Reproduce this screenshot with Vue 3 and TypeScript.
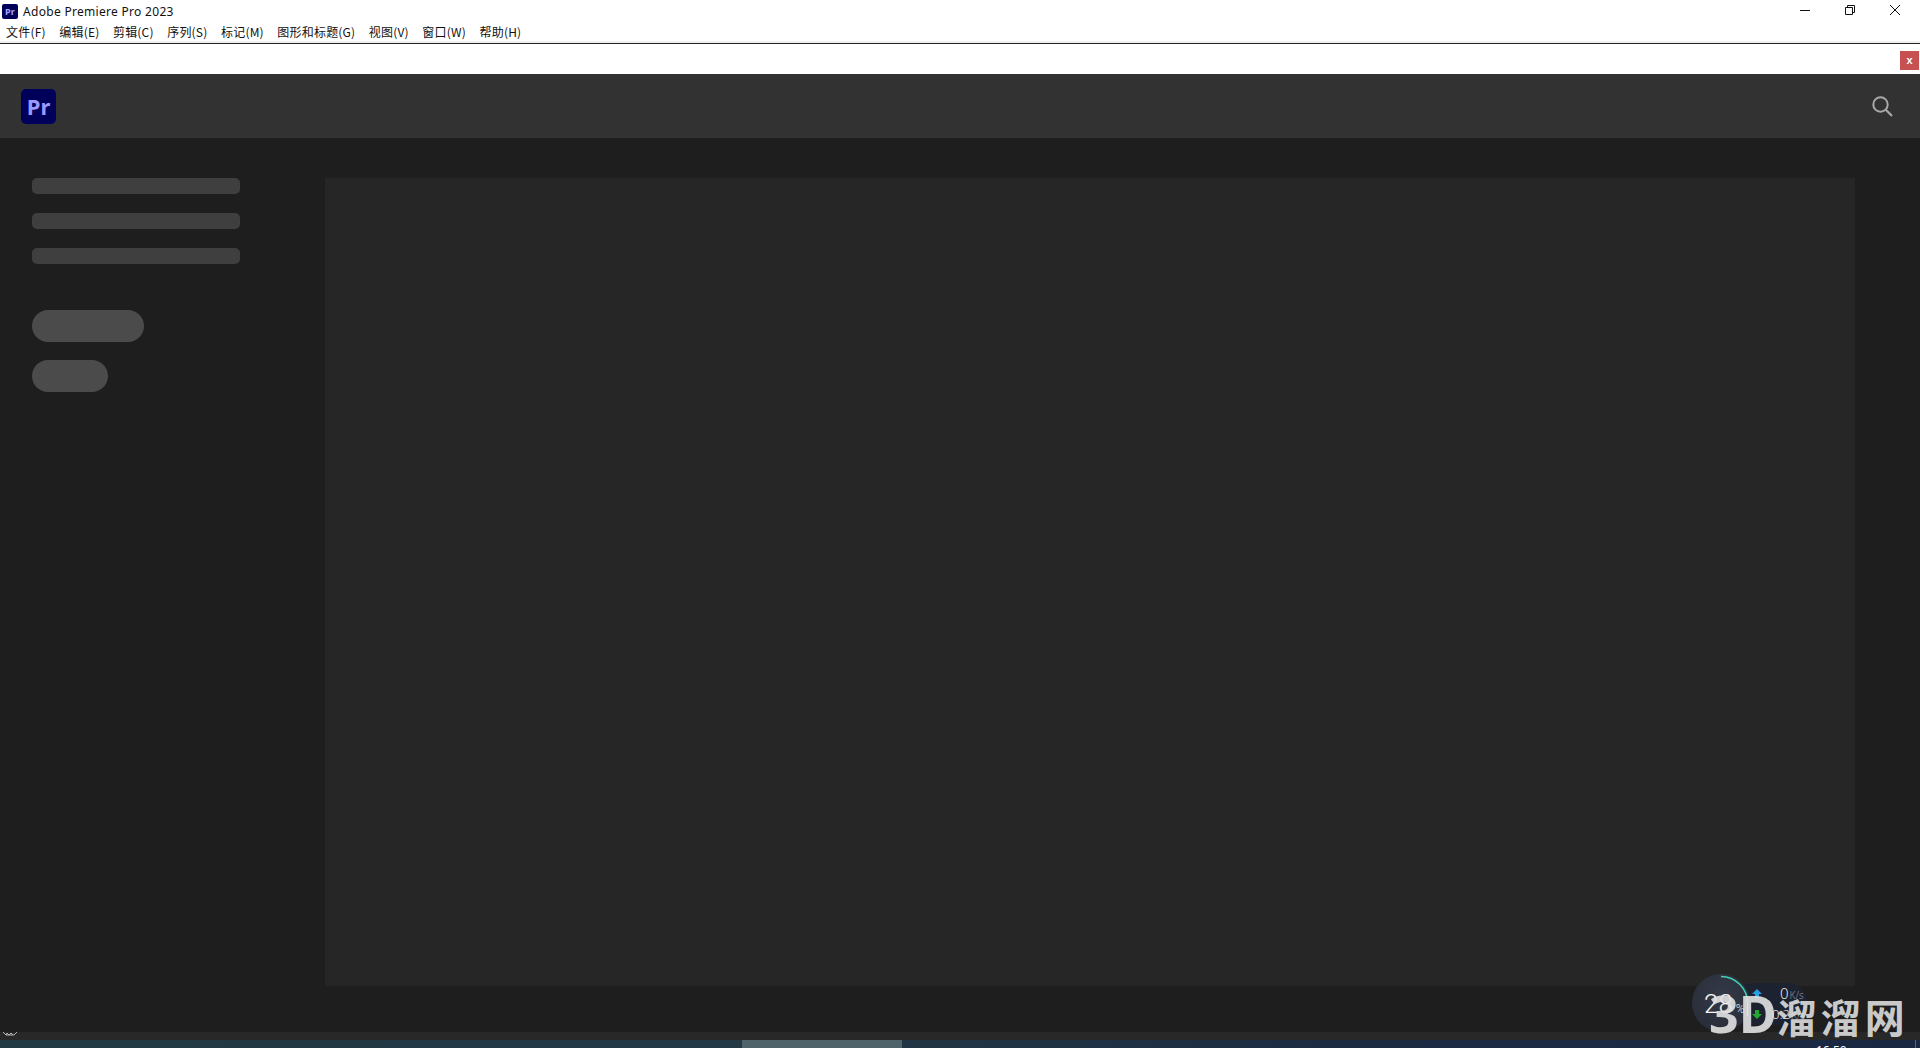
<script setup lang="ts">
const menus = ['文件(F)', '编辑(E)', '剪辑(C)', '序列(S)', '标记(M)', '图形和标题(G)', '视图(V)', '窗口(W)', '帮助(H)']
const skeletonLines = [1, 2, 3]
</script>

<template>
  <div class="window">
    <header class="titlebar">
      <div class="app-title">
        <span class="mini-logo">Pr</span>
        <span>Adobe Premiere Pro 2023</span>
      </div>
      <div class="win-controls">
        <svg width="10" height="10" viewBox="0 0 10 10"><path d="M0 5.5h10" stroke="#111" fill="none" /></svg>
        <svg width="10" height="10" viewBox="0 0 10 10"><path d="M.5 2.5h7v7h-7zM2.5 2.5v-2h7v7h-2" stroke="#111" fill="none" /></svg>
        <svg width="10" height="10" viewBox="0 0 10 10"><path d="M0 0l10 10M10 0L0 10" stroke="#111" fill="none" /></svg>
      </div>
    </header>

    <nav class="menubar">
      <span v-for="m in menus" :key="m">{{ m }}</span>
    </nav>

    <div class="notice">
      <button class="notice-close">x</button>
    </div>

    <div class="topbar">
      <div class="logo">Pr</div>
      <svg class="search" width="24" height="24" viewBox="0 0 24 24">
        <circle cx="10.5" cy="10.5" r="7.2" stroke="#a8a8a8" stroke-width="2" fill="none" />
        <path d="M15.8 15.8L22 22" stroke="#a8a8a8" stroke-width="2.2" fill="none" />
      </svg>
    </div>

    <main class="content">
      <aside class="sidebar">
        <div class="lines">
          <div v-for="n in skeletonLines" :key="n" class="line"></div>
        </div>
        <div class="pills">
          <div class="pill pill-long"></div>
          <div class="pill pill-short"></div>
        </div>
      </aside>
      <section class="panel"></section>
    </main>

    <div class="statusbar">
      <svg class="chevron" width="16" height="4" viewBox="0 0 16 4">
        <path d="M1 0l3 3h8l3-3M4 3l1-2 2 2 2-2 2 2" stroke="#b5b5b5" fill="none" />
      </svg>
    </div>

    <footer class="taskbar">
      <div class="task-active"></div>
      <span class="clock">16:50</span>
      <div class="task-edge"></div>
    </footer>

    <div class="net-widget">
      <div class="net-pill">
        <div class="net-row">
          <svg width="10" height="9" viewBox="0 0 10 9"><path d="M5 0l5 5H7v4H3V5H0z" fill="#2a9fe6" /></svg>
          <span class="net-val net-up">0<small>K/s</small></span>
        </div>
        <div class="net-row">
          <svg width="10" height="9" viewBox="0 0 10 9"><path d="M5 9L0 4h3V0h4v4h3z" fill="#22a82e" /></svg>
          <span class="net-val">0.2<small>K/s</small></span>
        </div>
      </div>
      <div class="gauge">
        <svg width="58" height="58" viewBox="0 0 58 58">
          <path d="M29 2.5A26.5 26.5 0 0 1 55.5 29" stroke="#3fd0b4" stroke-width="1.6" fill="none" />
          <path d="M55.5 29V42" stroke="#cfe8e2" stroke-width="1" fill="none" />
        </svg>
        <span class="gauge-val">28<small>%</small></span>
      </div>
    </div>

    <div class="watermark">3D<span>溜溜网</span></div>
  </div>
</template>

<style scoped>
.window {
  position: relative;
  height: 1048px;
  overflow: hidden;
  display: flex;
  flex-direction: column;
  background: #1e1e1e;
  font-family: "Noto Sans", "Noto Sans CJK SC", sans-serif;
}

.titlebar {
  height: 21px;
  background: #fff;
  display: flex;
  justify-content: space-between;
  align-items: flex-start;
  flex-shrink: 0;
}

.app-title {
  display: flex;
  align-items: center;
  gap: 5px;
  height: 22px;
  padding-left: 2px;
  font-size: 12px;
  letter-spacing: 0.3px;
  color: #111;
}

.mini-logo {
  width: 16px;
  height: 15px;
  border-radius: 2px;
  background: #00005b;
  color: #a5a5ff;
  font-size: 9px;
  font-weight: 700;
  line-height: 15px;
  text-align: center;
}

.win-controls {
  display: flex;
  gap: 35px;
  padding: 5px 20px 0 0;
}

.win-controls svg {
  display: block;
}

.menubar {
  height: 20px;
  background: #fff;
  display: flex;
  align-items: center;
  gap: 13.5px;
  padding-left: 6px;
  font-family: "Noto Sans CJK SC", sans-serif;
  font-size: 12px;
  letter-spacing: 0.2px;
  color: #111;
  border-bottom: 2px solid #f0f0f0;
  flex-shrink: 0;
}

.notice {
  height: 23px;
  background: #fff;
  border-top: 1px solid #222;
  display: flex;
  justify-content: flex-end;
  align-items: flex-start;
  padding: 7px 1px 0 0;
  flex-shrink: 0;
}

.notice-close {
  width: 19px;
  height: 19px;
  border: 0;
  padding: 0;
  background: #c75050;
  color: #fff;
  font-family: "Liberation Sans", sans-serif;
  font-size: 11px;
  font-weight: 700;
  line-height: 17px;
}

.topbar {
  height: 64px;
  background: #323232;
  display: flex;
  justify-content: space-between;
  align-items: center;
  padding: 0 26px 0 21px;
  flex-shrink: 0;
}

.logo {
  width: 35px;
  height: 35px;
  border-radius: 5px;
  background: #00005b;
  color: #9999ff;
  font-size: 22px;
  font-weight: 700;
  line-height: 34px;
  text-align: center;
}

.content {
  flex: 1;
  display: flex;
  padding: 40px 65px 46px 32px;
  min-height: 0;
}

.sidebar {
  width: 293px;
  flex-shrink: 0;
}

.lines {
  display: flex;
  flex-direction: column;
  gap: 19px;
  width: 208px;
}

.line {
  height: 16px;
  border-radius: 5px;
  background: #3f3f3f;
}

.pills {
  margin-top: 46px;
  display: flex;
  flex-direction: column;
  gap: 18px;
}

.pill {
  height: 32px;
  border-radius: 16px;
  background: #4b4b4b;
}

.pill-long {
  width: 112px;
}

.pill-short {
  width: 76px;
}

.panel {
  flex: 1;
  background: #262626;
}

.statusbar {
  height: 8px;
  background: #282828;
  flex-shrink: 0;
  padding-left: 2px;
}

.chevron {
  display: block;
}

.taskbar {
  height: 8px;
  position: relative;
  flex-shrink: 0;
  overflow: hidden;
  background: linear-gradient(90deg, #223a44 0%, #223845 40%, #1c2b42 70%, #1a2742 100%);
}

.task-active {
  position: absolute;
  left: 742px;
  top: 0;
  width: 160px;
  height: 8px;
  background: #4f636b;
}

.task-edge {
  position: absolute;
  left: 1915px;
  top: 0;
  width: 1px;
  height: 8px;
  background: #5a6472;
}

.clock {
  position: absolute;
  left: 1816px;
  top: 3px;
  font-size: 12px;
  line-height: 16px;
  color: #fff;
}

.net-widget {
  position: absolute;
  left: 1692px;
  top: 974px;
  width: 120px;
  height: 58px;
}

.net-pill {
  position: absolute;
  left: 40px;
  top: 9px;
  width: 76px;
  height: 42px;
  border-radius: 21px;
  background: #1c2230;
  display: flex;
  flex-direction: column;
  justify-content: space-around;
  padding-left: 20px;
  box-sizing: border-box;
}

.net-row {
  display: flex;
  align-items: center;
  gap: 10px;
  height: 20px;
}

.net-val {
  font-size: 13px;
  color: #e8e8e8;
  font-weight: 300;
  line-height: 1;
}

.net-up {
  margin-left: 8px;
  font-size: 15px;
}

.net-val small {
  font-size: 10px;
  color: #8a8f99;
  margin-left: 1px;
}

.gauge {
  position: absolute;
  left: 0;
  top: 0;
  width: 58px;
  height: 58px;
  border-radius: 50%;
  background: radial-gradient(circle at 50% 35%, #343947, #262a36);
}

.gauge svg {
  display: block;
}

.gauge-val {
  position: absolute;
  left: 12px;
  top: 15px;
  font-family: Roboto, sans-serif;
  font-size: 26px;
  font-weight: 300;
  line-height: 30px;
  color: #f4f4f4;
}

.gauge-val small {
  font-size: 12px;
  margin-left: 3px;
}

.watermark {
  position: absolute;
  left: 1709px;
  top: 978px;
  font-family: "Noto Sans", sans-serif;
  font-size: 52px;
  font-weight: 700;
  line-height: 70px;
  color: rgba(226, 226, 226, 0.9);
  white-space: nowrap;
}

.watermark span {
  font-family: "Noto Sans CJK SC", sans-serif;
  font-size: 40px;
  font-weight: 700;
  letter-spacing: 4px;
}
</style>
